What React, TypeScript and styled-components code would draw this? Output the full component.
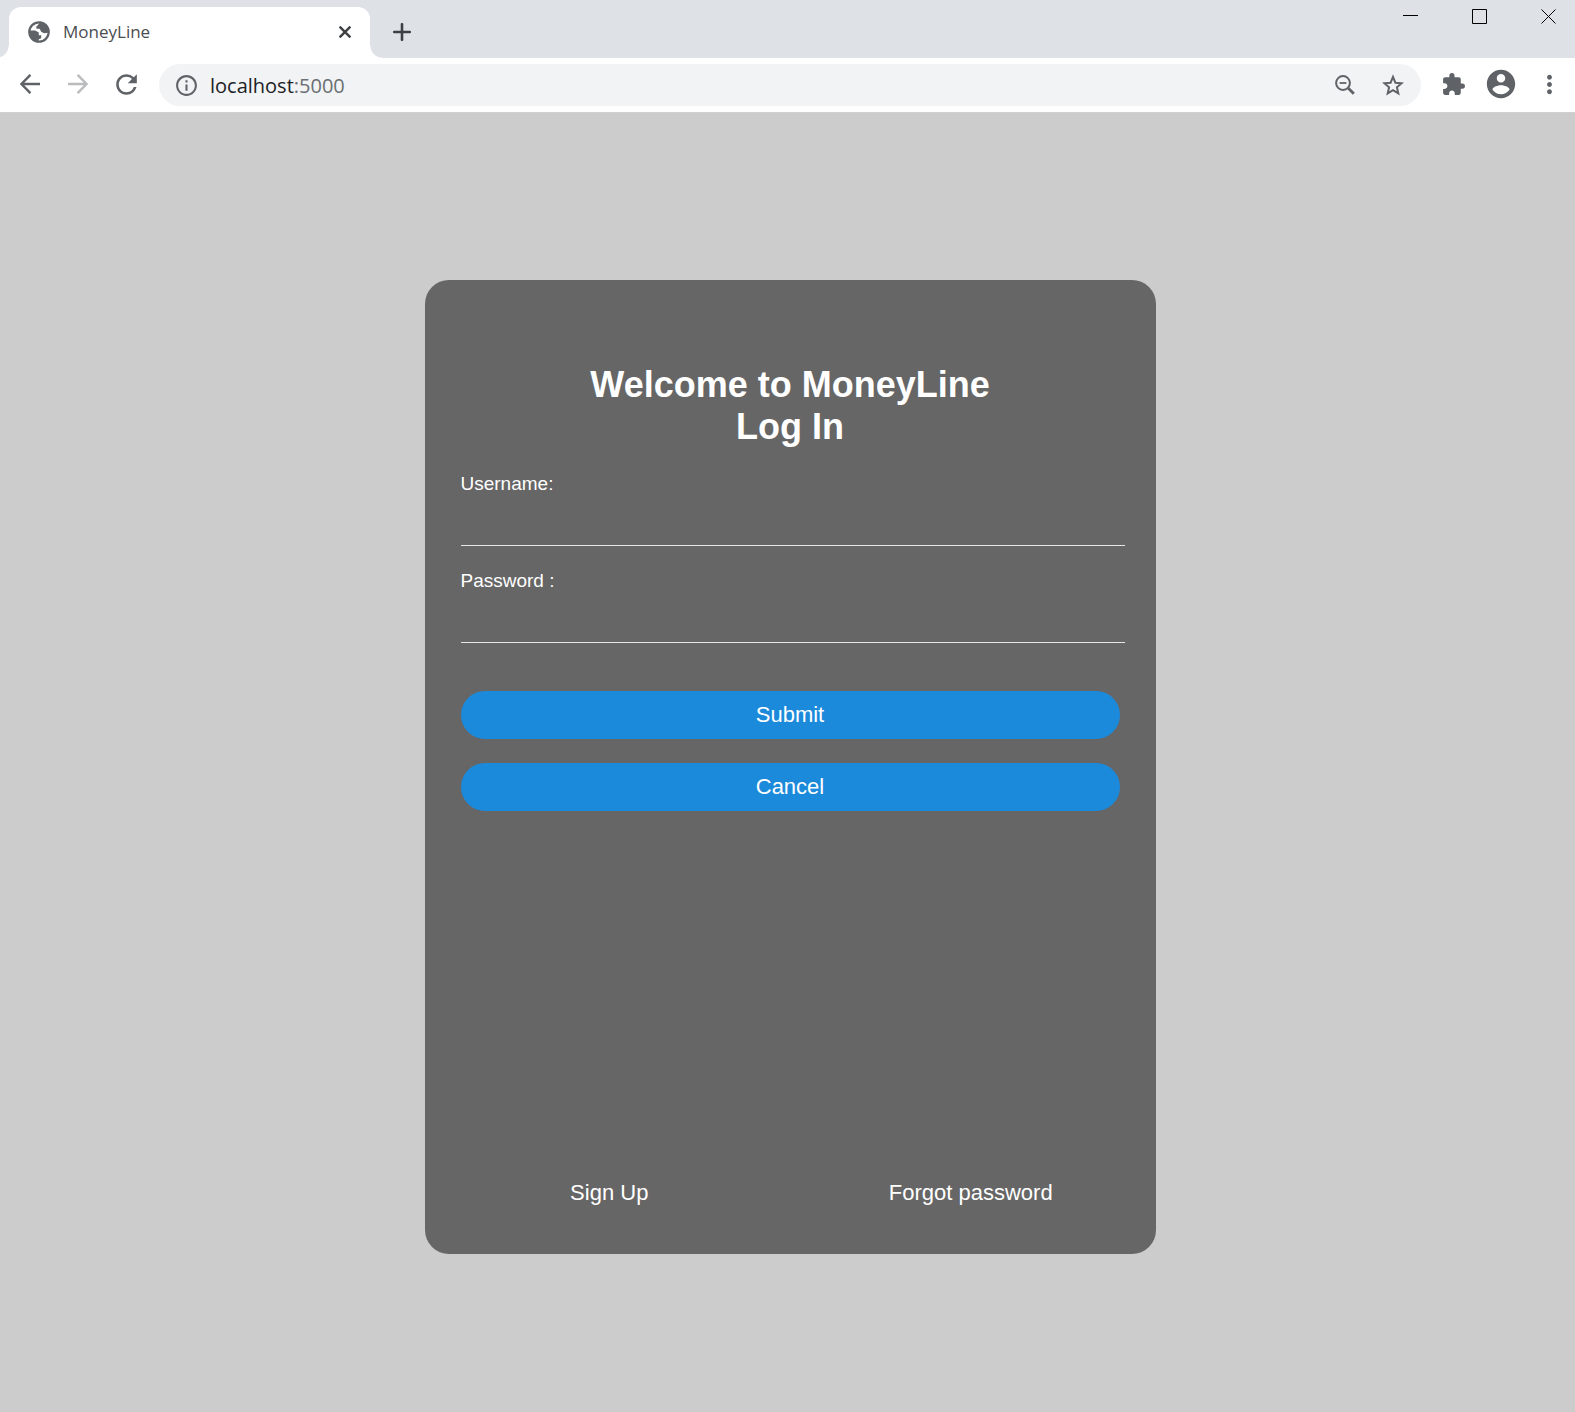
import React from "react";
import styled, { createGlobalStyle } from "styled-components";
import { MdRefresh, MdInfoOutline, MdExtension, MdMoreVert } from "react-icons/md";

const GlobalStyle = createGlobalStyle`
  * { box-sizing: border-box; }
  body {
    margin: 0;
    background: #cccccc;
    font-family: "Liberation Sans", Arial, sans-serif;
  }
  button, input { font: inherit; color: inherit; }
`;

const Window = styled.div`
  display: flex;
  flex-direction: column;
  min-height: 100vh;
`;

const TabStrip = styled.header`
  display: flex;
  align-items: flex-end;
  height: 58px;
  padding-left: 9px;
  background: #dee1e6;
`;

const Tab = styled.div`
  position: relative;
  display: flex;
  align-items: center;
  width: 361px;
  height: 51px;
  padding: 0 14px 2px 19px;
  border-radius: 12px 12px 0 0;
  background: #ffffff;
  color: #4a4d51;
  font-family: "Open Sans", "Noto Sans", sans-serif;
  font-size: 17px;

  &::before,
  &::after {
    content: "";
    position: absolute;
    bottom: 0;
    width: 12px;
    height: 12px;
  }
  &::before {
    right: 100%;
    background: radial-gradient(circle at 0 0, transparent 11px, #ffffff 12px);
  }
  &::after {
    left: 100%;
    background: radial-gradient(circle at 100% 0, transparent 11px, #ffffff 12px);
  }
`;

const TabTitle = styled.span`
  flex: 1;
  margin-left: 13px;
`;

const IconButton = styled.button<{ $size: number; $color?: string }>`
  display: grid;
  place-items: center;
  flex: none;
  width: ${(p) => p.$size}px;
  height: ${(p) => p.$size}px;
  padding: 0;
  border: 0;
  background: none;
  color: ${(p) => p.$color ?? "#5f6368"};
`;

const NewTab = styled.div`
  display: flex;
  align-items: center;
  height: 51px;
  margin-left: 16px;
  padding-bottom: 2px;
`;

const WindowControls = styled.div`
  display: flex;
  align-self: flex-start;
  gap: 22px;
  margin-left: auto;
  padding-right: 3px;
`;

const WindowButton = styled.button`
  display: grid;
  place-items: center;
  width: 47px;
  height: 33px;
  padding: 0;
  border: 0;
  background: none;
  color: #000000;
`;

const Toolbar = styled.nav`
  display: flex;
  align-items: center;
  height: 55px;
  padding: 0 2px 0 6px;
  border-bottom: 1px solid #d0d0d0;
  background: #ffffff;
`;

const ButtonGroup = styled.div`
  display: flex;
  padding-bottom: 2px;
`;

const AddressBar = styled.div`
  display: flex;
  flex: 1;
  align-items: center;
  height: 42px;
  margin: 0 8px 0 9px;
  padding: 0 4px 0 15px;
  border-radius: 21px;
  background: #f1f3f4;
  color: #5f6368;
`;

const Address = styled.a`
  flex: 1;
  margin-left: 11px;
  color: #6b6f73;
  font-family: "Open Sans", "Noto Sans", sans-serif;
  font-size: 20px;
  text-decoration: none;
`;

const Host = styled.span`
  color: #202124;
`;

const Page = styled.main`
  flex: 1;
  padding: 167px 0 60px 5px;
`;

const Card = styled.form`
  display: flex;
  flex-direction: column;
  width: 731px;
  max-width: 100%;
  min-height: 974px;
  margin: 0 auto;
  padding: 84px 36px 48px;
  border-radius: 24px;
  background: #666666;
  color: #ffffff;
`;

const Title = styled.h1`
  margin: 0 0 25px;
  font-size: 36px;
  line-height: 42px;
  text-align: center;
`;

const Field = styled.div`
  display: flex;
  flex-direction: column;
  margin: 0 -5px 24px 0;
`;

const Label = styled.label`
  font-size: 19px;
  line-height: 22px;
`;

const Input = styled.input`
  height: 51px;
  padding: 0;
  border: 0;
  border-bottom: 1px solid #e6e6e6;
  outline: 0;
  background: transparent;
  font-size: 19px;
`;

const Actions = styled.div`
  display: flex;
  flex-direction: column;
  gap: 24px;
  margin-top: 24px;
`;

const ActionButton = styled.button`
  height: 48px;
  border: 0;
  border-radius: 24px;
  background: #1c8adb;
  font-size: 22px;
`;

const Links = styled.div`
  display: grid;
  grid-template-columns: 1fr 1fr;
  margin: auto -32px 0;
  text-align: center;
`;

const TextLink = styled.a`
  color: #ffffff;
  font-size: 22px;
  line-height: 26px;
  text-decoration: none;
`;

const GlobeIcon = () => (
  <svg width="22" height="22" viewBox="0 0 22 22" fill="#5f6368" aria-hidden="true">
    <circle cx="11" cy="11" r="9.7" fill="#fff" stroke="#5f6368" strokeWidth="2.2" />
    <path d="M12.5.6 9.6 4.4 8.4 5.2v2.6h3.2l1.8 3.2 3 1.2 5-.8A10.4 10.4 0 0 0 12.5.6Z" />
    <path d="M.8 9.6h6.4l3.6 2v2.6h2.4v3l-2.4 1-.6 3A10.4 10.4 0 0 1 .8 9.6Z" />
  </svg>
);

const ArrowIcon = ({ forward = false }: { forward?: boolean }) => (
  <svg width="20" height="20" viewBox="0 0 20 20" fill="none" stroke="currentColor" strokeWidth="2.4">
    <path d={forward ? "M0 10h18M9.6.8l9 9.2-9 9.2" : "M20 10H2M10.4.8l-9 9.2 9 9.2"} />
  </svg>
);

const ZoomOutIcon = () => (
  <svg width="20" height="20" viewBox="0 0 20 20" fill="none" stroke="currentColor">
    <circle cx="8" cy="8" r="6.9" strokeWidth="2" />
    <path d="M4.6 8h6.8" strokeWidth="1.8" />
    <path d="m12.8 12.8 6 6" strokeWidth="2.8" />
  </svg>
);

const StarIcon = () => (
  <svg width="22" height="22" viewBox="0 0 22 22" fill="none" stroke="currentColor" strokeWidth="2">
    <path d="m11 2.9 2.4 5.8 6.2.5-4.7 4.1 1.4 6.1L11 16.2l-5.3 3.2 1.4-6.1-4.7-4.1 6.2-.5Z" />
  </svg>
);

const ProfileIcon = () => (
  <svg width="34" height="34" viewBox="0 0 24 24" fill="currentColor">
    <path d="M12 2C6.48 2 2 6.48 2 12s4.48 10 10 10 10-4.48 10-10S17.52 2 12 2zm0 3c1.66 0 3 1.34 3 3s-1.34 3-3 3-3-1.34-3-3 1.34-3 3-3zm0 14.2c-2.5 0-4.71-1.28-6-3.22.03-1.99 4-3.08 6-3.08 1.99 0 5.97 1.09 6 3.08-1.29 1.94-3.5 3.22-6 3.22z" />
  </svg>
);

type FieldProps = { id: string; label: string; type: string };

const FormField = ({ id, label, type }: FieldProps) => (
  <Field>
    <Label htmlFor={id}>{label}</Label>
    <Input id={id} name={id} type={type} />
  </Field>
);

export default function App() {
  return (
    <Window>
      <GlobalStyle />
      <TabStrip>
        <Tab>
          <GlobeIcon />
          <TabTitle>MoneyLine</TabTitle>
          <IconButton $size={22} $color="#3c4043" aria-label="Close tab">
            <svg width="12" height="12" viewBox="0 0 12 12" stroke="currentColor" strokeWidth="2.4">
              <path d="m.6.6 10.8 10.8M11.4.6.6 11.4" />
            </svg>
          </IconButton>
        </Tab>
        <NewTab>
          <IconButton $size={32} $color="#3c4043" aria-label="New tab">
            <svg width="18" height="18" viewBox="0 0 18 18" stroke="currentColor" strokeWidth="2.6" strokeLinecap="round">
              <path d="M9 1.2v15.6M1.2 9h15.6" />
            </svg>
          </IconButton>
        </NewTab>
        <WindowControls>
          <WindowButton aria-label="Minimize">
            <svg width="15" height="15" stroke="currentColor"><path d="M0 6.5h15" /></svg>
          </WindowButton>
          <WindowButton aria-label="Maximize">
            <svg width="15" height="15" stroke="currentColor" fill="none"><path d="M.5.5h14v14H.5z" /></svg>
          </WindowButton>
          <WindowButton aria-label="Close">
            <svg width="15" height="15" stroke="currentColor"><path d="m.5.5 14 14M14.5.5l-14 14" /></svg>
          </WindowButton>
        </WindowControls>
      </TabStrip>
      <Toolbar>
        <ButtonGroup>
          <IconButton $size={48} aria-label="Back"><ArrowIcon /></IconButton>
          <IconButton $size={48} $color="#babcbe" aria-label="Forward"><ArrowIcon forward /></IconButton>
          <IconButton $size={48} aria-label="Reload"><MdRefresh size={31} /></IconButton>
        </ButtonGroup>
        <AddressBar>
          <MdInfoOutline size={25} />
          <Address href="#"><Host>localhost</Host>:5000</Address>
          <IconButton $size={48} aria-label="Zoom out"><ZoomOutIcon /></IconButton>
          <IconButton $size={48} aria-label="Bookmark this tab"><StarIcon /></IconButton>
        </AddressBar>
        <ButtonGroup>
          <IconButton $size={48} aria-label="Extensions"><MdExtension size={25} /></IconButton>
          <IconButton $size={48} aria-label="Profile"><ProfileIcon /></IconButton>
          <IconButton $size={48} aria-label="Menu"><MdMoreVert size={29} /></IconButton>
        </ButtonGroup>
      </Toolbar>
      <Page>
        <Card onSubmit={(e) => e.preventDefault()}>
          <Title>Welcome to MoneyLine<br />Log In</Title>
          <FormField id="username" label="Username:" type="text" />
          <FormField id="password" label="Password :" type="password" />
          <Actions>
            <ActionButton type="submit">Submit</ActionButton>
            <ActionButton type="button">Cancel</ActionButton>
          </Actions>
          <Links>
            <div><TextLink href="#signup">Sign Up</TextLink></div>
            <div><TextLink href="#forgot">Forgot password</TextLink></div>
          </Links>
        </Card>
      </Page>
    </Window>
  );
}
